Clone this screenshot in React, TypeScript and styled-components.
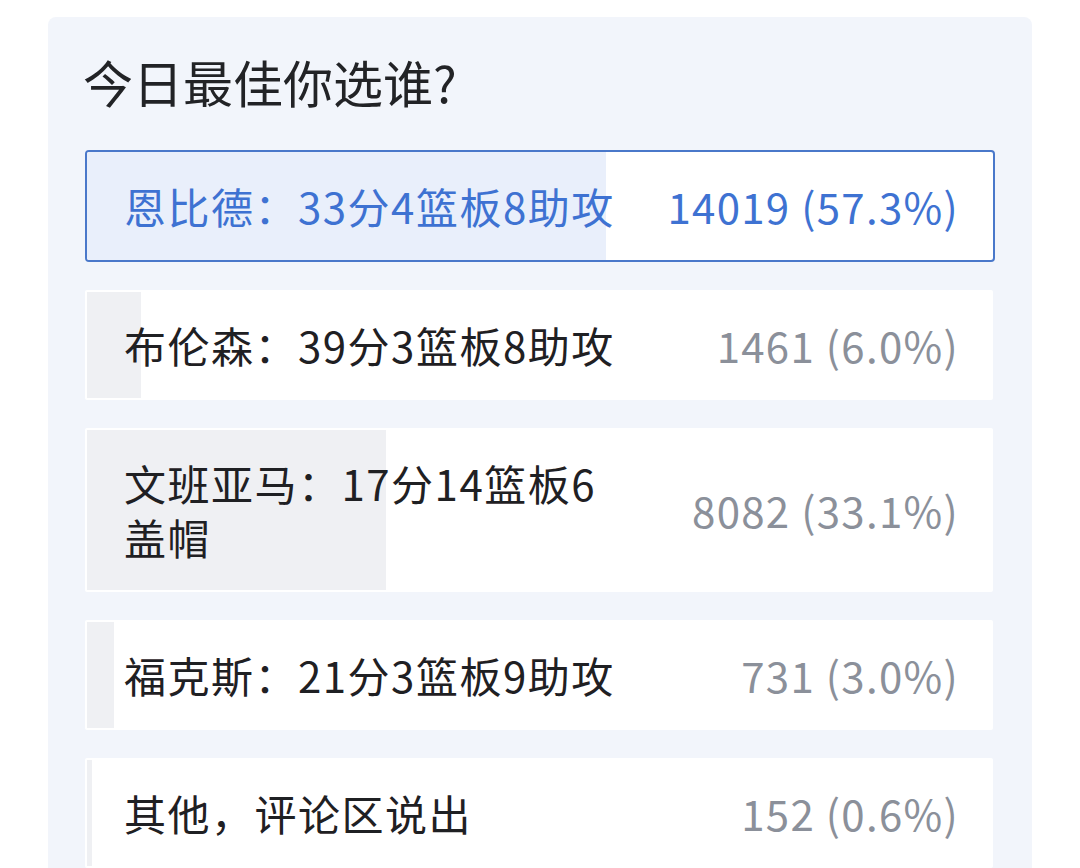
import styled, { createGlobalStyle } from 'styled-components';

const GlobalStyle = createGlobalStyle`
  html, body {
    margin: 0;
    padding: 0;
    background: #ffffff;
  }
  body {
    font-family: "Noto Sans CJK SC", "Noto Sans", sans-serif;
  }
`;

const Page = styled.div`
  padding: 17px 48px 0 48px;
  height: 868px;
  box-sizing: border-box;
  overflow: hidden;
`;

const Card = styled.div`
  background: #f2f5fb;
  border-radius: 8px;
  padding: 29px 37px 40px 37px;
  min-height: 900px;
  box-sizing: border-box;
`;

const Title = styled.h1`
  margin: 0 0 34px -2px;
  font-size: 50px;
  line-height: 70px;
  font-weight: 400;
  color: #222326;
`;

const List = styled.div`
  display: flex;
  flex-direction: column;
  gap: 28px;
`;

const Option = styled.div<{ $selected?: boolean }>`
  position: relative;
  overflow: hidden;
  background: #ffffff;
  border-radius: ${(p) => (p.$selected ? '4px' : '2px')};
  border: 2px solid ${(p) => (p.$selected ? '#4a78ca' : 'transparent')};
  margin-right: ${(p) => (p.$selected ? '0' : '2px')};
  display: flex;
  align-items: center;
  justify-content: space-between;
  padding: ${(p) => (p.$selected ? '27px 34px 27px 37px' : '26px 32px 26px 37px')};
`;

const Fill = styled.div<{ $selected?: boolean }>`
  position: absolute;
  left: 0;
  top: 0;
  bottom: 0;
  background: ${(p) => (p.$selected ? '#e9effb' : '#eff0f3')};
`;

const Label = styled.div<{ $selected?: boolean }>`
  position: relative;
  max-width: 497px;
  font-size: 42px;
  line-height: 54px;
  letter-spacing: 1.5px;
  color: ${(p) => (p.$selected ? '#3e72d2' : '#1f2023')};
`;

const Count = styled.div<{ $selected?: boolean }>`
  position: relative;
  flex-shrink: 0;
  margin-left: 24px;
  font-size: 42px;
  line-height: 54px;
  letter-spacing: 1.3px;
  color: ${(p) => (p.$selected ? '#3e72d2' : '#8b909a')};
`;

const options = [
  { label: '恩比德：33分4篮板8助攻', count: 14019, pct: 57.3, selected: true },
  { label: '布伦森：39分3篮板8助攻', count: 1461, pct: 6.0 },
  { label: '文班亚马：17分14篮板6盖帽', count: 8082, pct: 33.1 },
  { label: '福克斯：21分3篮板9助攻', count: 731, pct: 3.0 },
  { label: '其他，评论区说出', count: 152, pct: 0.6 },
];

export default function App() {
  return (
    <Page>
      <GlobalStyle />
      <Card>
        <Title>今日最佳你选谁?</Title>
        <List>
          {options.map((o) => (
            <Option key={o.label} $selected={o.selected}>
              <Fill $selected={o.selected} style={{ width: `${o.pct}%` }} />
              <Label $selected={o.selected}>{o.label}</Label>
              <Count $selected={o.selected}>
                {o.count} ({o.pct.toFixed(1)}%)
              </Count>
            </Option>
          ))}
        </List>
      </Card>
    </Page>
  );
}
